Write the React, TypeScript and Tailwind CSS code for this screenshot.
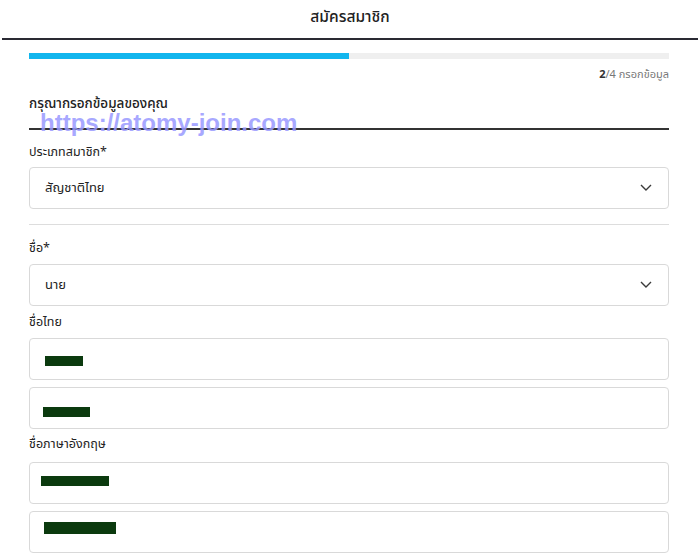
import React from "react";

const Chevron = () => (
  <svg width="12" height="7" viewBox="0 0 12 7" fill="none">
    <path d="M1 1l5 5 5-5" stroke="#3a3a3a" strokeWidth="1.4" />
  </svg>
);

const SelectBox = ({ text, className = "" }: { text: string; className?: string }) => (
  <div className={`flex h-[42px] items-center justify-between rounded-[4px] border border-[#d9d9d9] pl-[15px] pr-[16px] ${className}`}>
    <span className="text-[13px] text-[#222]">{text}</span>
    <Chevron />
  </div>
);

const InputBox = ({ w, h, offset, dy, className = "" }: { w: number; h: number; offset: number; dy: number; className?: string }) => (
  <div className={`flex h-[42px] items-center rounded-[4px] border border-[#d9d9d9] ${className}`}>
    <div className="bg-[#0b3a0e]" style={{ width: w, height: h, marginLeft: offset, marginTop: dy }} />
  </div>
);

export default function App() {
  return (
    <div className="relative min-h-[559px] w-[700px] bg-white text-[#222]" style={{ fontFamily: "'Noto Sans', 'Noto Sans Thai', 'DejaVu Sans', sans-serif" }}>
      <div className="flex h-[38px] items-center justify-center pb-[4px]">
        <span className="text-[15.5px] font-medium text-[#222]">สมัครสมาชิก</span>
      </div>
      <div className="mx-[2px] h-[2px] bg-[#2a2a33]" />
      <div className="ml-[29px] w-[640px]">
        <div className="mt-[13px] flex h-[6px] bg-[#efefef]">
          <div className="h-full w-[320px] bg-[#12b6ee]" />
        </div>
        <div className="mt-[8px] flex justify-end text-[11px] leading-[14px] text-[#777]">
          <span className="font-bold text-[#333]">2</span>/4 กรอกข้อมูล
        </div>
        <div className="mt-[13px] text-[13.5px] font-medium leading-[18px] text-[#222]">กรุณากรอกข้อมูลของคุณ</div>
        <div className="mt-[16px] h-[1.5px] bg-[#333]" />
        <div className="mt-[14px] text-[12.5px] leading-[16px]">ประเภทสมาชิก*</div>
        <SelectBox text="สัญชาติไทย" className="mt-[7px]" />
        <div className="mt-[15px] h-px bg-[#dddddd]" />
        <div className="mt-[15px] text-[12.5px] leading-[16px]">ชื่อ*</div>
        <SelectBox text="นาย" className="mt-[8px]" />
        <div className="mt-[8px] text-[12.5px] leading-[16px]">ชื่อไทย</div>
        <InputBox w={38} h={10} offset={15} dy={4} className="mt-[8px]" />
        <InputBox w={47} h={10} offset={13} dy={8} className="mt-[7px]" />
        <div className="mt-[7px] text-[12.5px] leading-[16px]">ชื่อภาษาอังกฤษ</div>
        <InputBox w={68} h={10} offset={11} dy={-3} className="mt-[10px]" />
        <InputBox w={72} h={12} offset={14} dy={-8} className="mt-[7px]" />
      </div>
      <div
        className="pointer-events-none absolute left-[40px] top-[111px] text-[24px] font-bold leading-[24px] text-[#9a9aff] opacity-85"
        style={{ fontFamily: "'Liberation Sans', Arial, sans-serif" }}
      >
        https://atomy-join.com
      </div>
    </div>
  );
}
